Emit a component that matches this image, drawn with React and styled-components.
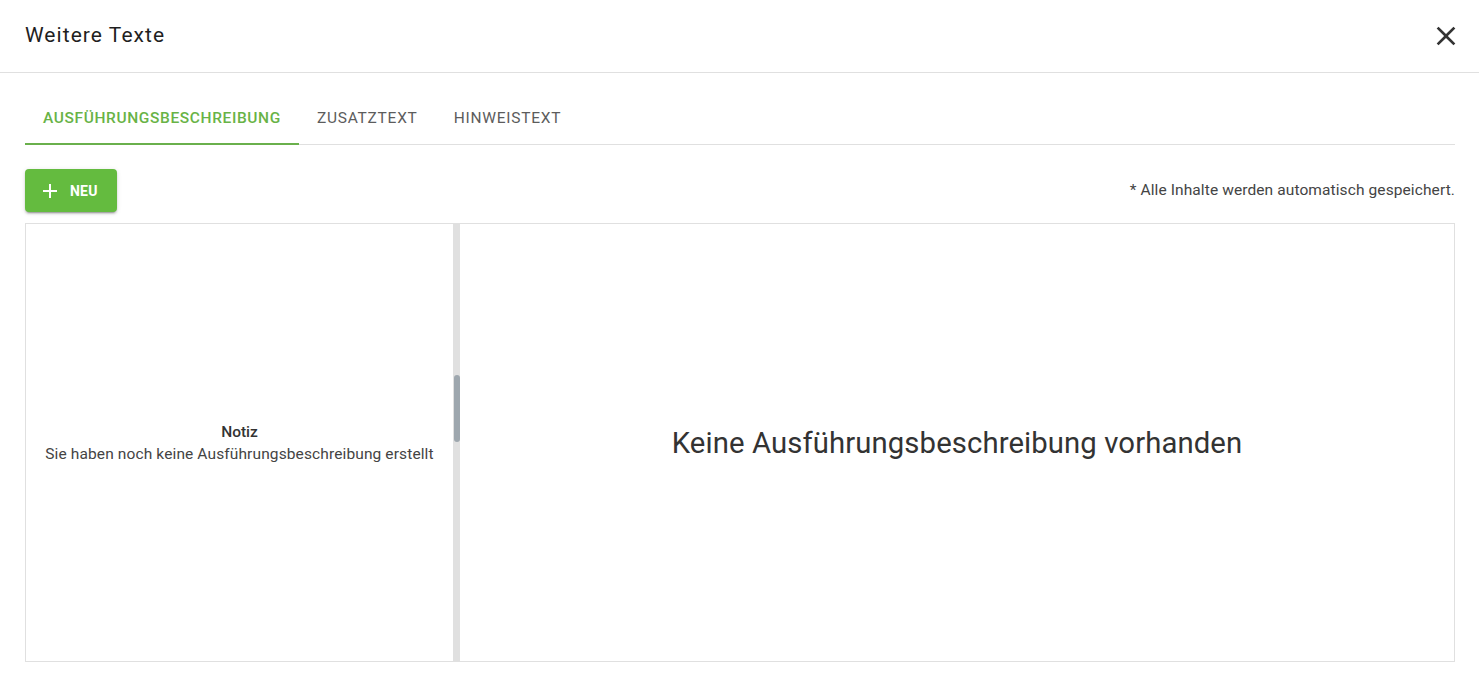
import React, { useState } from 'react'
import styled, { createGlobalStyle } from 'styled-components'

const GlobalStyle = createGlobalStyle`
  html, body {
    margin: 0;
    padding: 0;
    background: #ffffff;
  }
  body {
    font-family: Roboto, "Liberation Sans", Arial, sans-serif;
    color: #333333;
  }
  * {
    box-sizing: border-box;
  }
`

const tabs = ['Ausführungsbeschreibung', 'Zusatztext', 'Hinweistext']

export default function App() {
  const [active, setActive] = useState(0)

  return (
    <>
      <GlobalStyle />
      <Dialog>
        <Header>
          <Title>Weitere Texte</Title>
          <CloseButton aria-label="Schließen">
            <svg width="32" height="32" viewBox="0 0 24 24" fill="#333333">
              <path d="M19 6.41L17.59 5 12 10.59 6.41 5 5 6.41 10.59 12 5 17.59 6.41 19 12 13.41 17.59 19 19 17.59 13.41 12z" />
            </svg>
          </CloseButton>
        </Header>
        <Content>
          <TabBar>
            {tabs.map((t, i) => (
              <Tab key={t} $active={i === active} onClick={() => setActive(i)}>
                {t}
              </Tab>
            ))}
          </TabBar>
          <Toolbar>
            <NewButton>
              <svg width="24" height="24" viewBox="0 0 24 24" fill="#ffffff">
                <path d="M19 13h-6v6h-2v-6H5v-2h6V5h2v6h6v2z" />
              </svg>
              Neu
            </NewButton>
            <Hint>* Alle Inhalte werden automatisch gespeichert.</Hint>
          </Toolbar>
          <Panel>
            <ListPane>
              <EmptyTitle>Notiz</EmptyTitle>
              <EmptyText>Sie haben noch keine Ausführungsbeschreibung erstellt</EmptyText>
            </ListPane>
            <Splitter>
              <Thumb />
            </Splitter>
            <DetailPane>
              <BigMessage>Keine Ausführungsbeschreibung vorhanden</BigMessage>
            </DetailPane>
          </Panel>
        </Content>
      </Dialog>
    </>
  )
}

const Dialog = styled.div`
  height: 678px;
  display: flex;
  flex-direction: column;
  background: #ffffff;
`

const Header = styled.header`
  height: 73px;
  flex-shrink: 0;
  display: flex;
  align-items: center;
  justify-content: space-between;
  padding: 0 17px 0 25px;
  border-bottom: 1px solid #e0e0e0;
`

const Title = styled.h2`
  margin: 0;
  font-size: 21px;
  font-weight: 400;
  color: #1f1f1f;
  letter-spacing: 1.05px;
  padding-bottom: 2px;
`

const CloseButton = styled.button`
  border: 0;
  background: transparent;
  padding: 0;
  width: 32px;
  height: 32px;
  display: flex;
  align-items: center;
  justify-content: center;
  cursor: pointer;
`

const Content = styled.div`
  flex: 1;
  display: flex;
  flex-direction: column;
  padding: 24px 24px 16px 25px;
  min-height: 0;
`

const TabBar = styled.nav`
  display: flex;
  height: 48px;
  border-bottom: 1px solid #e0e0e0;
  flex-shrink: 0;
`

const Tab = styled.button`
  border: 0;
  background: transparent;
  font-family: inherit;
  font-size: 15.5px;
  font-weight: ${p => (p.$active ? 500 : 400)};
  text-transform: uppercase;
  letter-spacing: ${p => (p.$active ? '0.62px' : '0.75px')};
  padding: 0 18px 4px;
  color: ${p => (p.$active ? '#68b346' : '#5c5c5c')};
  border-bottom: 2px solid ${p => (p.$active ? '#6ab04c' : 'transparent')};
  margin-bottom: -1px;
  cursor: pointer;
`

const Toolbar = styled.div`
  display: flex;
  align-items: center;
  justify-content: space-between;
  margin-top: 24px;
  margin-bottom: 11px;
  flex-shrink: 0;
`

const NewButton = styled.button`
  display: flex;
  align-items: center;
  gap: 8px;
  height: 43px;
  padding: 0 19px 0 13px;
  border: 0;
  border-radius: 4px;
  background: #64bb3f;
  color: #ffffff;
  font-family: inherit;
  font-size: 14px;
  font-weight: 700;
  letter-spacing: 0.2px;
  text-transform: uppercase;
  box-shadow: 0 3px 1px -2px rgba(0, 0, 0, 0.2), 0 2px 2px 0 rgba(0, 0, 0, 0.14),
    0 1px 5px 0 rgba(0, 0, 0, 0.12);
  cursor: pointer;
`

const Hint = styled.span`
  font-size: 15.5px;
  letter-spacing: 0.1px;
  color: #444444;
  padding-bottom: 2px;
`

const Panel = styled.section`
  flex: 1;
  display: flex;
  border: 1px solid #e0e0e0;
  min-height: 0;
`

const ListPane = styled.div`
  width: 427px;
  display: flex;
  flex-direction: column;
  align-items: center;
  justify-content: center;
  text-align: center;
  line-height: 22px;
`

const EmptyTitle = styled.div`
  font-size: 15.5px;
  font-weight: 500;
  color: #333333;
`

const EmptyText = styled.div`
  font-size: 15.5px;
  letter-spacing: 0.12px;
  color: #444444;
`

const Splitter = styled.div`
  width: 7px;
  background: #e0e0e0;
  display: flex;
  justify-content: center;
  flex-shrink: 0;
`

const Thumb = styled.div`
  width: 6px;
  height: 67px;
  margin-top: 151px;
  border-radius: 3px;
  background: #9ea7ae;
`

const DetailPane = styled.div`
  flex: 1;
  display: flex;
  align-items: center;
  justify-content: center;
`

const BigMessage = styled.h3`
  margin: 0;
  font-size: 29.3px;
  font-weight: 400;
  color: #333333;
  letter-spacing: 0.1px;
`
